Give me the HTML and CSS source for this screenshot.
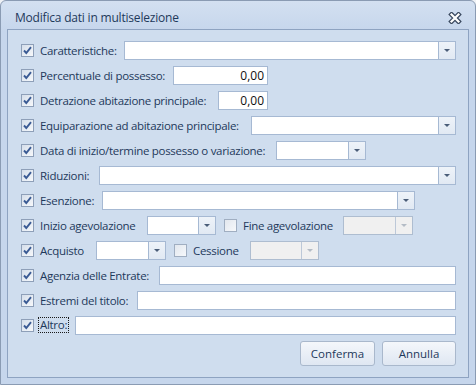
FILE: index.html
```html
<!DOCTYPE html>
<html lang="it">
<head>
<meta charset="utf-8">
<title>Modifica dati in multiselezione</title>
<link rel="stylesheet" href="styles.css">
</head>
<body>
<div class="window">
  <div class="titlebar">
    <span class="title">Modifica dati in multiselezione</span>
    <svg class="close" width="14" height="12" viewBox="0 0 14 12">
      <path d="M3.5 2.5 L10.5 9.5 M10.5 2.5 L3.5 9.5" stroke="#3b4a60" stroke-width="4.6" stroke-linecap="square" fill="none"/>
      <path d="M3.5 2.5 L10.5 9.5 M10.5 2.5 L3.5 9.5" stroke="#ffffff" stroke-width="2.2" stroke-linecap="square" fill="none"/>
    </svg>
  </div>
  <div class="panel">
    <div class="row">
      <span class="cb on"><svg width="11" height="11" viewBox="0 0 11 11"><path d="M2 5.5 L4.3 8 L9 2.2" stroke="#3a5a94" stroke-width="1.9" fill="none"/></svg></span>
      <span class="lbl w84">Caratteristiche:</span>
      <div class="combo grow"><div class="field"></div><div class="dd"><i></i></div></div>
    </div>
    <div class="row">
      <span class="cb on"><svg width="11" height="11" viewBox="0 0 11 11"><path d="M2 5.5 L4.3 8 L9 2.2" stroke="#3a5a94" stroke-width="1.9" fill="none"/></svg></span>
      <span class="lbl w133">Percentuale di possesso:</span>
      <div class="input num w95">0,00</div>
    </div>
    <div class="row">
      <span class="cb on"><svg width="11" height="11" viewBox="0 0 11 11"><path d="M2 5.5 L4.3 8 L9 2.2" stroke="#3a5a94" stroke-width="1.9" fill="none"/></svg></span>
      <span class="lbl w178">Detrazione abitazione principale:</span>
      <div class="input num w50">0,00</div>
    </div>
    <div class="row">
      <span class="cb on"><svg width="11" height="11" viewBox="0 0 11 11"><path d="M2 5.5 L4.3 8 L9 2.2" stroke="#3a5a94" stroke-width="1.9" fill="none"/></svg></span>
      <span class="lbl w211">Equiparazione ad abitazione principale:</span>
      <div class="combo grow"><div class="field"></div><div class="dd"><i></i></div></div>
    </div>
    <div class="row">
      <span class="cb on"><svg width="11" height="11" viewBox="0 0 11 11"><path d="M2 5.5 L4.3 8 L9 2.2" stroke="#3a5a94" stroke-width="1.9" fill="none"/></svg></span>
      <span class="lbl w236">Data di inizio/termine possesso o variazione:</span>
      <div class="combo w90"><div class="field"></div><div class="dd"><i></i></div></div>
    </div>
    <div class="row">
      <span class="cb on"><svg width="11" height="11" viewBox="0 0 11 11"><path d="M2 5.5 L4.3 8 L9 2.2" stroke="#3a5a94" stroke-width="1.9" fill="none"/></svg></span>
      <span class="lbl w59">Riduzioni:</span>
      <div class="combo grow"><div class="field"></div><div class="dd"><i></i></div></div>
    </div>
    <div class="row">
      <span class="cb on"><svg width="11" height="11" viewBox="0 0 11 11"><path d="M2 5.5 L4.3 8 L9 2.2" stroke="#3a5a94" stroke-width="1.9" fill="none"/></svg></span>
      <span class="lbl w62">Esenzione:</span>
      <div class="combo w313"><div class="field"></div><div class="dd"><i></i></div></div>
    </div>
    <div class="row">
      <span class="cb on"><svg width="11" height="11" viewBox="0 0 11 11"><path d="M2 5.5 L4.3 8 L9 2.2" stroke="#3a5a94" stroke-width="1.9" fill="none"/></svg></span>
      <span class="lbl w107">Inizio agevolazione</span>
      <div class="combo w69"><div class="field"></div><div class="dd"><i></i></div></div>
      <span class="cb off second"></span>
      <span class="lbl w100">Fine agevolazione</span>
      <div class="combo w70 disabled"><div class="field"></div><div class="dd"><i></i></div></div>
    </div>
    <div class="row">
      <span class="cb on"><svg width="11" height="11" viewBox="0 0 11 11"><path d="M2 5.5 L4.3 8 L9 2.2" stroke="#3a5a94" stroke-width="1.9" fill="none"/></svg></span>
      <span class="lbl w56">Acquisto</span>
      <div class="combo w70"><div class="field"></div><div class="dd"><i></i></div></div>
      <span class="cb off second"></span>
      <span class="lbl w57">Cessione</span>
      <div class="combo w69 disabled"><div class="field"></div><div class="dd"><i></i></div></div>
    </div>
    <div class="row">
      <span class="cb on"><svg width="11" height="11" viewBox="0 0 11 11"><path d="M2 5.5 L4.3 8 L9 2.2" stroke="#3a5a94" stroke-width="1.9" fill="none"/></svg></span>
      <span class="lbl w119">Agenzia delle Entrate:</span>
      <div class="input grow"></div>
    </div>
    <div class="row">
      <span class="cb on"><svg width="11" height="11" viewBox="0 0 11 11"><path d="M2 5.5 L4.3 8 L9 2.2" stroke="#3a5a94" stroke-width="1.9" fill="none"/></svg></span>
      <span class="lbl w97">Estremi del titolo:</span>
      <div class="input grow"></div>
    </div>
    <div class="row">
      <span class="cb on"><svg width="11" height="11" viewBox="0 0 11 11"><path d="M2 5.5 L4.3 8 L9 2.2" stroke="#3a5a94" stroke-width="1.9" fill="none"/></svg></span>
      <span class="lbl-wrap w35"><span class="focus">Altro:</span></span>
      <div class="input grow"></div>
    </div>
    <div class="buttons">
      <button class="btn b75">Conferma</button>
      <button class="btn b74">Annulla</button>
    </div>
  </div>
</div>
</body>
</html>
```

FILE: styles.css
```css
html, body {
  margin: 0;
  padding: 0;
  background: #eef1f5;
}
body {
  font-family: "Open Sans", "Noto Sans", sans-serif;
  font-size: 11.5px;
  color: #1e395b;
}
.window {
  width: 476px;
  height: 385px;
  box-sizing: border-box;
  border: 1px solid #8a9bb3;
  border-radius: 6px 6px 0 0;
  background: linear-gradient(#d3e0f1 0, #c6d6ec 30px, #c6d6ec 100%);
  display: flex;
  flex-direction: column;
}
.titlebar {
  height: 28px;
  display: flex;
  align-items: center;
  justify-content: space-between;
  padding: 0 13px 0 14px;
}
.title {
  font-size: 12px;
  color: #1e395b;
  letter-spacing: -0.2px;
  position: relative;
  top: 2px;
}
.close {
  display: block;
  position: relative;
  top: 3px;
}
.panel {
  margin: 0 6px 6px 6px;
  border: 1px solid #8ea3c1;
  background: #cfddee;
  flex: 1;
  padding: 10px 12px 0 13px;
  display: flex;
  flex-direction: column;
  gap: 5px;
}
.row {
  height: 20px;
  display: flex;
  align-items: center;
}
.cb {
  width: 13px;
  height: 13px;
  box-sizing: border-box;
  border: 1px solid #8e9fb8;
  background: linear-gradient(135deg, #d5deea, #f6f8fb);
  margin-right: 6px;
  flex: none;
  display: flex;
  align-items: center;
  justify-content: center;
}
.cb.off {
  border-color: #a0aec1;
  background: linear-gradient(135deg, #e2e7ee, #f6f8fb);
}
.cb.second {
  margin-left: 8px;
}
.lbl, .lbl-wrap {
  flex: none;
  white-space: nowrap;
  overflow: visible;
  letter-spacing: -0.3px;
}
.lbl-wrap { margin-left: -2px; }
.focus {
  border: 1px dotted #1a1a1a;
  padding: 0 1px;
  line-height: 14px;
  display: inline-block;
}
.w35 { width: 37px; }
.w56 { width: 56px; }
.w57 { width: 57px; }
.w59 { width: 59px; }
.w62 { width: 62px; }
.w84 { width: 84px; }
.w97 { width: 97px; }
.w100 { width: 100px; }
.w107 { width: 107px; }
.w119 { width: 119px; }
.w133 { width: 133px; }
.w178 { width: 178px; }
.w211 { width: 211px; }
.w236 { width: 236px; }
.input.w95 { width: 95px; }
.input.w50 { width: 50px; }
.combo.w90 { width: 90px; }
.combo.w313 { width: 313px; }
.combo.w69 { width: 69px; }
.combo.w70 { width: 70px; }
.input, .combo {
  height: 19px;
  box-sizing: border-box;
  border: 1px solid #a6b9d3;
  background: #ffffff;
  flex-shrink: 0;
}
.grow.input, .grow.combo { flex: 1 1 auto; }
.input.num {
  text-align: right;
  padding-right: 3px;
  color: #101010;
  line-height: 17px;
  font-size: 12px;
}
.combo {
  display: flex;
}
.combo .field {
  flex: 1;
}
.combo .dd {
  width: 16px;
  border-left: 1px solid #a6b9d3;
  background: linear-gradient(#eef3f9, #e1e9f3);
  display: flex;
  align-items: center;
  justify-content: center;
}
.combo .dd i {
  width: 0;
  height: 0;
  border-left: 3px solid transparent;
  border-right: 3px solid transparent;
  border-top: 3px solid #4a5d78;
}
.combo.disabled {
  border-color: #aebdd0;
  background: #f0f0f0;
}
.combo.disabled .dd {
  background: #f0f0f0;
  border-left-color: #bcc8d8;
}
.combo.disabled .dd i {
  border-top-color: #b4bcc6;
}
.buttons {
  display: flex;
  justify-content: flex-end;
  gap: 7px;
  margin-top: 1px;
}
.btn {
  height: 25px;
  box-sizing: border-box;
  border: 1px solid #a9b8cc;
  border-radius: 3px;
  background: linear-gradient(#f4f7fb, #dfe7f2);
  font-family: "Open Sans", "Noto Sans", sans-serif;
  font-size: 11.5px;
  color: #1e395b;
  padding: 0;
}
.b75 { width: 75px; }
.b74 { width: 74px; }
```
